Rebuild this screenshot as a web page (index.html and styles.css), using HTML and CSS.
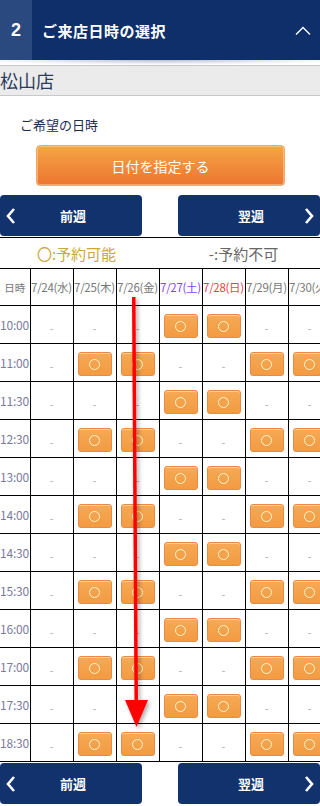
FILE: index.html
```html
<!DOCTYPE html>
<html lang="ja">
<head>
    <meta charset="UTF-8">
    <meta name="viewport" content="width=device-width, initial-scale=1.0">
    <title>ご来店日時の選択</title>
    <link rel="stylesheet" href="styles.css">
</head>
<body>
    <div class="page">
        <div class="step-header">
            <div class="step-num">2</div>
            <div class="step-title">ご来店日時の選択</div>
            <svg class="step-toggle" width="16" height="10" viewBox="0 0 16 10">
                <polyline points="1,8.5 8,1.5 15,8.5" fill="none" stroke="#fff" stroke-width="1.4"/>
            </svg>
        </div>
        <div class="header-shadow"></div>

        <div class="shop-bar">松山店</div>

        <div class="wish-label">ご希望の日時</div>
        <div class="date-btn-wrap">
            <button class="date-button">日付を指定する</button>
        </div>

        <div class="week-nav">
            <button class="week-btn prev">
                <svg width="12" height="18" viewBox="0 0 12 18"><polyline points="9,2 3,9 9,16" fill="none" stroke="#fff" stroke-width="2.6"/></svg>
                <span>前週</span>
            </button>
            <button class="week-btn next">
                <span>翌週</span>
                <svg width="12" height="18" viewBox="0 0 12 18"><polyline points="3,2 9,9 3,16" fill="none" stroke="#fff" stroke-width="2.6"/></svg>
            </button>
        </div>

        <div class="legend">
            <span class="legend-ok">〇:予約可能</span>
            <span class="legend-ng">-:予約不可</span>
        </div>

        <div class="table-wrap">
            <table class="slots" id="slots">
                <colgroup>
                    <col class="col-time">
                    <col><col><col><col><col><col><col>
                </colgroup>
                <thead>
                    <tr>
                        <th class="time-head">日時</th>
                        <th>7/24(水)</th>
                        <th>7/25(木)</th>
                        <th>7/26(金)</th>
                        <th class="sat">7/27(土)</th>
                        <th class="sun">7/28(日)</th>
                        <th>7/29(月)</th>
                        <th>7/30(火)</th>
                    </tr>
                </thead>
                <tbody id="slotBody"></tbody>
            </table>
        </div>

        <div class="week-nav bottom">
            <button class="week-btn prev">
                <svg width="12" height="18" viewBox="0 0 12 18"><polyline points="9,2 3,9 9,16" fill="none" stroke="#fff" stroke-width="2.6"/></svg>
                <span>前週</span>
            </button>
            <button class="week-btn next">
                <span>翌週</span>
                <svg width="12" height="18" viewBox="0 0 12 18"><polyline points="3,2 9,9 3,16" fill="none" stroke="#fff" stroke-width="2.6"/></svg>
            </button>
        </div>

        <!-- annotation arrow over the table -->
        <svg class="guide-arrow" width="40" height="440" viewBox="0 0 40 440">
            <defs>
                <filter id="shade" x="-50%" y="-10%" width="200%" height="120%">
                    <feDropShadow dx="2" dy="2" stdDeviation="2" flood-color="#000" flood-opacity="0.35"/>
                </filter>
            </defs>
            <g filter="url(#shade)">
                <polygon points="13,2 16.5,2 19,410 15.5,410" fill="#ff0000"/>
                <polygon points="6,405 29,405 17.5,432" fill="#ff0000"/>
            </g>
        </svg>
    </div>

    <script>
        const times = ['10:00', '11:00', '11:30', '12:30', '13:00', '14:00', '14:30', '15:30', '16:00', '17:00', '17:30', '18:30'];
        const patternA = [0, 0, 0, 1, 1, 0, 0];
        const patternB = [0, 1, 1, 0, 0, 1, 1];
        const body = document.getElementById('slotBody');

        times.forEach((time, i) => {
            const row = document.createElement('tr');
            const th = document.createElement('td');
            th.className = 'time';
            th.textContent = time;
            row.appendChild(th);
            const pattern = i % 2 === 0 ? patternA : patternB;
            pattern.forEach(open => {
                const cell = document.createElement('td');
                if (open) {
                    cell.innerHTML = '<span class="slot-btn"><span class="ring"></span></span>';
                } else {
                    cell.innerHTML = '<span class="dash">-</span>';
                }
                row.appendChild(cell);
            });
            body.appendChild(row);
        });
    </script>
</body>
</html>
```
FILE: styles.css
```css
body {
    margin: 0;
    font-family: "Noto Sans CJK JP", "Noto Sans", sans-serif;
    background-color: #fff;
    color: #1d2c4c;
}

.page {
    position: relative;
    width: 320px;
    overflow: hidden;
}

/* step header */
.step-header {
    display: flex;
    align-items: center;
    height: 60px;
    background-color: #0f2f6b;
    color: #fff;
}

.step-num {
    width: 32px;
    height: 60px;
    display: flex;
    justify-content: center;
    align-items: center;
    background-color: #29497f;
    font-family: "Liberation Sans", sans-serif;
    font-size: 18px;
    font-weight: bold;
}

.step-title {
    flex: 1;
    padding-left: 10px;
    font-size: 15px;
    font-weight: bold;
    letter-spacing: 0.5px;
}

.step-toggle {
    margin-right: 9px;
    margin-top: 2px;
}

.header-shadow {
    height: 5px;
    background: radial-gradient(ellipse 60% 100% at 50% 0%, #b9bfcc 0%, #eef0f3 70%, #fff 100%);
}

.shop-bar {
    height: 29px;
    line-height: 29px;
    border-top: 1px solid #c8c8c8;
    border-bottom: 1px solid #c8c8c8;
    background-color: #ebebeb;
    font-size: 18px;
    color: #2c3b5c;
}

.wish-label {
    margin-top: 20px;
    padding-left: 20px;
    font-size: 13px;
    line-height: 18px;
    color: #1d2c4c;
}

.date-btn-wrap {
    padding: 11px 35px 0 36px;
}

.date-button {
    display: block;
    width: 100%;
    height: 41px;
    border: 1px solid #f3a86a;
    border-radius: 4px;
    background: linear-gradient(#f5a545, #ec7530);
    box-shadow: inset 0 0 0 1px rgba(255, 220, 170, 0.5);
    color: #fff;
    font-family: "Noto Sans CJK JP", sans-serif;
    font-size: 14px;
}

/* week navigation */
.week-nav {
    display: flex;
    justify-content: space-between;
    margin-top: 9px;
}

.week-nav.bottom {
    margin-top: 1px;
}

.week-btn {
    display: flex;
    align-items: center;
    width: 142px;
    height: 41px;
    padding: 0 5px;
    border: none;
    border-radius: 4px;
    background-color: #12326e;
    color: #fff;
    font-family: "Noto Sans CJK JP", sans-serif;
    font-size: 13px;
    font-weight: bold;
}

.week-btn span {
    flex: 1;
    text-align: center;
}

.week-btn.prev span {
    padding-right: 8px;
}

.week-btn.next span {
    padding-left: 16px;
}

/* legend */
.legend {
    display: flex;
    height: 30px;
    align-items: center;
    margin-top: 1px;
    border-top: 1px solid #000;
    font-size: 15px;
}

.legend span {
    flex: 1;
    text-align: center;
}

.legend-ok {
    color: #c9a93b;
    padding-right: 2px;
}

.legend-ng {
    color: #666;
    padding-left: 12px;
}

/* table */
.table-wrap {
    width: 320px;
    overflow: hidden;
}

.slots {
    width: 331px;
    table-layout: fixed;
    border-collapse: collapse;
}

.slots col {
    width: 43px;
}

.slots col.col-time {
    width: 30px;
}

.slots th,
.slots td {
    padding: 0;
    border: 1px solid #000;
    text-align: center;
    white-space: nowrap;
}

.slots th:first-child,
.slots td:first-child {
    border-left: none;
}

.slots th {
    height: 36px;
    font-weight: normal;
    font-size: 11.5px;
    color: #777;
    overflow: visible;
    letter-spacing: -0.3px;
}

.slots th.time-head {
    font-size: 10.5px;
    letter-spacing: 0;
}

.slots th.sat {
    color: #8a45f0;
}

.slots th.sun {
    color: #f0413e;
}

.slots td {
    height: 37px;
}

.slots td.time {
    font-size: 12px;
    color: #7b7b9e;
    text-align: left;
    letter-spacing: -0.2px;
}

.dash {
    font-size: 10px;
    color: #9aa0b0;
}

.slot-btn {
    display: inline-flex;
    justify-content: center;
    align-items: center;
    width: 32px;
    height: 22px;
    margin-top: 2px;
    border: 1px solid #ec8a45;
    border-radius: 3px;
    background: linear-gradient(#f6a955, #f29b42);
    box-shadow: inset 0 1px 0 rgba(255, 230, 190, 0.7);
    vertical-align: middle;
}

.ring {
    width: 9px;
    height: 9px;
    border: 1px solid #fff7cf;
    border-radius: 50%;
}

/* annotation */
.guide-arrow {
    position: absolute;
    left: 119px;
    top: 295px;
}
```
